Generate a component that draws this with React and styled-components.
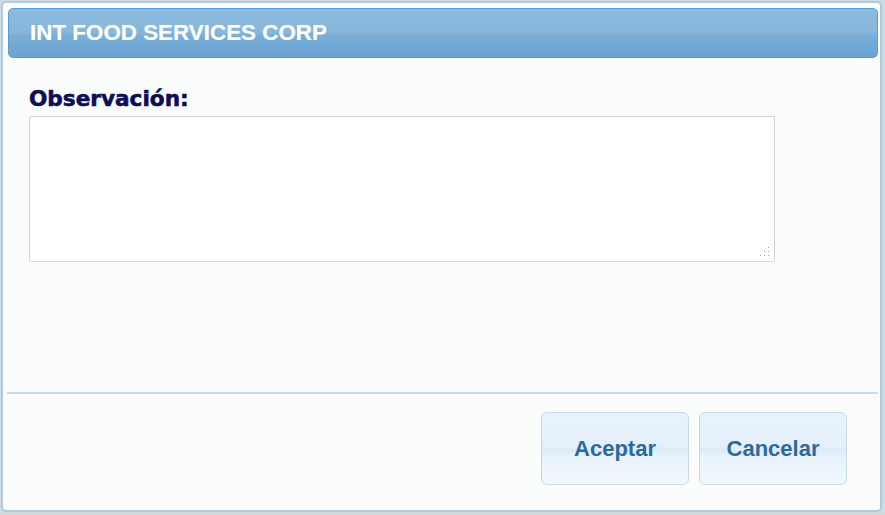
import React from 'react'
import styled, { createGlobalStyle } from 'styled-components'

const GlobalStyle = createGlobalStyle`
    html, body {
        margin: 0;
        padding: 0;
        background: #d3dadd;
    }
    body {
        font-family: "Liberation Sans", Arial, sans-serif;
    }
`

function App() {
    return (
        <>
            <GlobalStyle />
            <Page>
                <Dialog>
                    <TitleBar>
                        <Title>INT FOOD SERVICES CORP</Title>
                    </TitleBar>
                    <Body>
                        <Label htmlFor="obs">Observación:</Label>
                        <FieldWrap>
                            <TextArea id="obs" />
                            {/* resize grip */}
                            <Grip width="10" height="10" viewBox="0 0 10 10">
                                <rect x="8" y="0" width="1" height="1" />
                                <rect x="4" y="4" width="1" height="1" />
                                <rect x="8" y="4" width="1" height="1" />
                                <rect x="0" y="8" width="1" height="1" />
                                <rect x="4" y="8" width="1" height="1" />
                                <rect x="8" y="8" width="1" height="1" />
                            </Grip>
                        </FieldWrap>
                    </Body>
                    <Separator />
                    <Footer>
                        <DialogButton>Aceptar</DialogButton>
                        <DialogButton>Cancelar</DialogButton>
                    </Footer>
                </Dialog>
            </Page>
        </>
    )
}

export default App

const Page = styled.div`
    width: 885px;
    height: 515px;
    padding: 1px 0 0 1px;
    box-sizing: border-box;
`

const Dialog = styled.div`
    width: 881px;
    height: 511px;
    box-sizing: border-box;
    border: 2px solid #aacbe5;
    border-radius: 5px;
    background: #fbfdfd;
    display: flex;
    flex-direction: column;
`

const TitleBar = styled.div`
    margin: 5px 2px 0 5px;
    height: 50px;
    box-sizing: border-box;
    border: 1px solid #5b9bd0;
    border-radius: 5px;
    background: linear-gradient(to bottom, #8dbbde 0%, #86b6dc 50%, #78aed8 55%, #6aa4d2 100%);
    display: flex;
    align-items: center;
    padding-left: 21px;
`

const Title = styled.span`
    color: #ffffff;
    font-family: "Liberation Sans", Arial, sans-serif;
    font-weight: bold;
    font-size: 22.4px;
    text-shadow: 0 0 1px rgba(255, 255, 255, 0.4);
`

const Body = styled.div`
    flex: 1;
    padding: 30px 0 0 26px;
    display: flex;
    flex-direction: column;
    align-items: flex-start;
`

const Label = styled.label`
    font-family: "DejaVu Sans", Verdana, sans-serif;
    font-weight: bold;
    font-size: 21.6px;
    line-height: 21.5px;
    color: #0e0e58;
    -webkit-text-stroke: 0.6px #0e0e58;
    margin-bottom: 6px;
`

const FieldWrap = styled.div`
    position: relative;
    width: 746px;
    height: 146px;
`

const TextArea = styled.textarea`
    width: 100%;
    height: 100%;
    box-sizing: border-box;
    border: 1px solid #d2d4d7;
    border-bottom-color: #dcdde0;
    border-radius: 2px;
    background: #ffffff;
    resize: none;
    outline: none;
    margin: 0;
    display: block;
`

const Grip = styled.svg`
    position: absolute;
    right: 5px;
    bottom: 5px;
    fill: #a2a2a2;
`

const Separator = styled.div`
    height: 2px;
    margin: 0 2px 0 4px;
    background: #c6dbec;
`

const Footer = styled.div`
    height: 116px;
    box-sizing: border-box;
    padding: 18px 33px 25px 0;
    display: flex;
    justify-content: flex-end;
    align-items: flex-start;
    gap: 10px;
`

const DialogButton = styled.button`
    width: 148px;
    height: 73px;
    box-sizing: border-box;
    border: 1px solid #c5dbec;
    border-radius: 6px;
    background: linear-gradient(to bottom, #e8f2fc 0%, #e5f0fb 46%, #dcebf8 52%, #e9f3fd 62%, #f0f7fe 100%);
    color: #2b6a9b;
    font-family: "Liberation Sans", Arial, sans-serif;
    font-weight: bold;
    font-size: 22px;
    padding: 0;
    cursor: pointer;
`
